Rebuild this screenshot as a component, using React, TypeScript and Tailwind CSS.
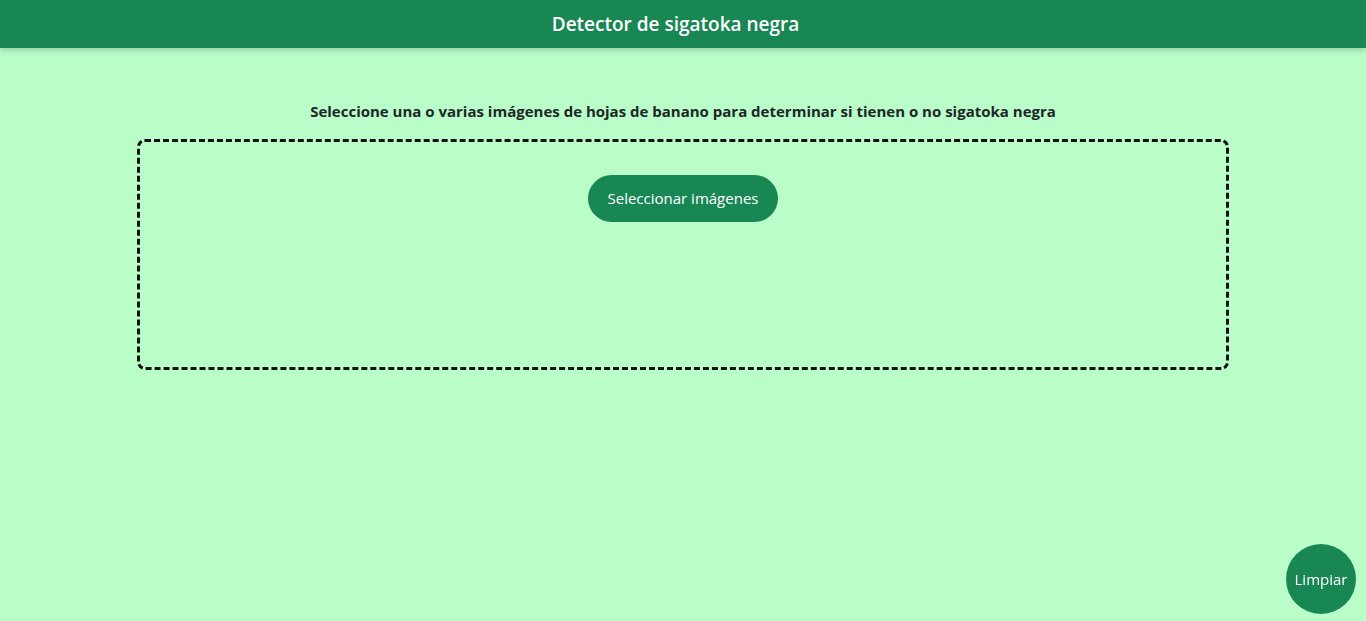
export default function App() {
  return (
    <div
      className="min-h-screen bg-[#b9fec8] text-[#212529]"
      style={{ fontFamily: '"Open Sans", "Noto Sans", sans-serif' }}
    >
      <header className="flex h-12 items-center justify-center bg-[#198754] pr-[15px] shadow-[0_2px_6px_rgba(0,0,0,0.2)]">
        <h1 className="text-[19px] font-semibold text-white">Detector de sigatoka negra</h1>
      </header>

      <main className="flex flex-col items-center pt-[52px]">
        <p className="text-[15px] font-bold">
          Seleccione una o varias imágenes de hojas de banano para determinar si tienen o no sigatoka negra
        </p>

        <div className="mt-[16px] flex h-[231px] w-4/5 justify-center rounded-lg border-[3px] border-dashed border-[#111] pt-[33px]">
          <button className="h-[47px] rounded-full bg-[#198754] px-5 text-[15px] text-white">
            Seleccionar imágenes
          </button>
        </div>
      </main>

      <button className="fixed bottom-[7px] right-[10px] flex h-[70px] w-[70px] items-center justify-center rounded-full bg-[#198754] text-[15px] text-white">
        Limpiar
      </button>
    </div>
  );
}
